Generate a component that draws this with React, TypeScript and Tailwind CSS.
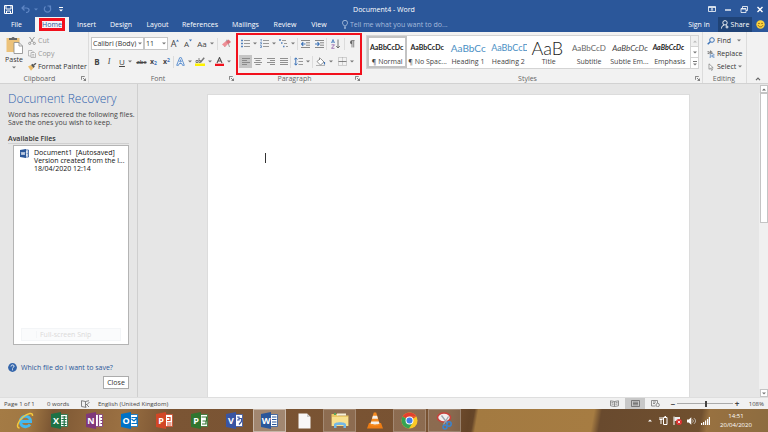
import type { ReactNode } from "react";

type Kids = { children?: ReactNode };

function Caret({ light = false }: { light?: boolean }) {
  return (
    <svg viewBox="0 0 4 3" className={`h-[3px] w-1 shrink-0 ${light ? "fill-white" : "fill-[#777]"}`} aria-hidden="true">
      <path d="M0 .5h4L2 2.5z" />
    </svg>
  );
}

function Tool({ label, width, active = false, children }: Kids & { label: string; width: string; active?: boolean }) {
  return (
    <button
      type="button"
      aria-label={label}
      title={label}
      className={`flex h-[13px] shrink-0 items-center justify-center gap-[3px] whitespace-nowrap leading-none ${width} ${active ? "bg-[#c5c5c5]" : ""}`}
    >
      {children}
    </button>
  );
}

function Divider() {
  return <span className="h-3 w-px shrink-0 bg-[#dcdcdc]" />;
}

function Launcher() {
  return (
    <button type="button" aria-label="More options" className="flex h-2 w-2 items-center justify-center">
      <svg viewBox="0 0 6 6" className="h-[5px] w-[5px]" fill="none" stroke="#666" strokeWidth="1">
        <path d="M.5 4.5v-4h4M2.5 2.5l3 3M5.5 3v2.5H3" />
      </svg>
    </button>
  );
}

function Group({ name, className, launcher = true, children }: Kids & { name: string; className: string; launcher?: boolean }) {
  return (
    <section aria-label={name} className={`flex flex-col ${className}`}>
      <div className="flex h-[42px]">{children}</div>
      <div className="flex h-[9px] items-center pr-px">
        <span className="flex-1 text-center text-[7px] leading-none text-[#666]">{name}</span>
        {launcher && <Launcher />}
      </div>
    </section>
  );
}

/* ---------- ribbon drawings ---------- */

function PasteIcon() {
  return (
    <svg viewBox="0 0 17 18" className="h-[18px] w-[17px]">
      <rect x="0.5" y="2" width="13" height="14" fill="#ecc27a" />
      <path d="M3 4V2h2.500a1.800 1.800 0 0 1 3.200 0H11v2z" fill="#666" />
      <path d="M8 6.500h5l3.500 3.500v7.500H8z" fill="#fff" stroke="#888" strokeWidth=".8" />
      <path d="M13 6.500V10h3.500" fill="none" stroke="#888" strokeWidth=".8" />
    </svg>
  );
}

function CutIcon() {
  return (
    <svg viewBox="0 0 8 8" className="h-2 w-2" fill="none" stroke="#999">
      <path d="M1.500 0l4 5.500M6.500 0l-4 5.500" />
      <circle cx="1.700" cy="6.400" r="1.100" />
      <circle cx="6.300" cy="6.400" r="1.100" />
    </svg>
  );
}

function CopyIcon() {
  return (
    <svg viewBox="0 0 8 8" className="h-2 w-2" fill="#f4f4f4" stroke="#aaa" strokeWidth=".8">
      <path d="M.5.5h3.500l1 1v4.500H.5z" />
      <path d="M3 2.500h3.500l1 1v4H3zM4.200 4.500h2M4.200 6h2" />
    </svg>
  );
}

function BrushIcon() {
  return (
    <svg viewBox="0 0 9 8" className="h-2 w-[9px]">
      <path d="M0 3.500l3-1.500 2.500 3L3 7.800z" fill="#ecbc68" />
      <path d="M3 2l1.500-1.200L6.800 3.500 5.500 5z" fill="#555" />
      <path d="M5.500 2.200L8 .3" stroke="#555" strokeWidth="1.400" />
    </svg>
  );
}

function ListIcon({ kind }: { kind: "bullet" | "number" | "level" }) {
  return (
    <svg viewBox="0 0 9 9" className="h-[9px] w-[9px]" fill="none">
      {kind === "bullet" && <path d="M0 1.500h2M0 4.500h2M0 7.500h2" stroke="#5482bd" strokeWidth="1.600" />}
      {kind === "number" && <path d="M.5 0h.7v2.500M0 3.700h1.500v1.300H.2M0 6.700h1.500v1.700H0" stroke="#5482bd" strokeWidth=".8" />}
      {kind === "level" && <path d="M0 1h2M2 4h1.500M4 7.500h1.500" stroke="#5482bd" strokeWidth="1.500" />}
      {kind === "level" ? (
        <path d="M3 1.500h4M5 4.500h3M7 7.500h2" stroke="#999" />
      ) : (
        <path d="M3 1.500h6M3 4.500h6M3 7.500h6" stroke="#999" />
      )}
    </svg>
  );
}

function IndentIcon({ right = false }: { right?: boolean }) {
  return (
    <svg viewBox="0 0 9 8" className="h-2 w-[9px]" fill="none">
      <path d="M0 .5h9M5 2.800h4M5 5.200h4M0 7.500h9" stroke="#888" />
      <path d={right ? "M0 4h4M2.500 2.200L4.200 4 2.500 5.800" : "M4.500 4H.5M2.200 2.200L.5 4l1.700 1.800"} stroke="#3c73b8" strokeWidth="1.100" />
    </svg>
  );
}

const alignLines = {
  left: "M0 .5h8M0 2.500h5M0 4.500h8M0 6.500h5",
  center: "M0 .5h8M1.500 2.500h5M0 4.500h8M1.500 6.500h5",
  right: "M0 .5h8M3 2.500h5M0 4.500h8M3 6.500h5",
  justify: "M0 .5h8M0 2.500h8M0 4.500h8M0 6.500h8",
};

function AlignIcon({ kind }: { kind: keyof typeof alignLines }) {
  return (
    <svg viewBox="0 0 8 7" className="h-[7px] w-2" fill="none" stroke="#858585" strokeWidth=".9">
      <path d={alignLines[kind]} />
    </svg>
  );
}

/* ---------- title bar and tabs ---------- */

function TitleBar() {
  return (
    <header className="grid h-[17px] grid-cols-[1fr_auto_1fr] items-center pt-px text-white">
      <div className="flex items-center pl-1">
        <button type="button" aria-label="Save" className="w-[17px]">
          <svg viewBox="0 0 9 9" className="h-[9px] w-[9px]" fill="none" stroke="#fff">
            <path d="M.5.5h8v8h-8zM2 .5v3.500h5V.5M2.500 8.500V6h4v2.500" />
          </svg>
        </button>
        <button type="button" aria-label="Undo" className="flex w-[22px] items-center gap-1">
          <svg viewBox="0 0 9 8" className="h-2 w-[9px]" fill="none" stroke="#5f86c4" strokeWidth="1.200">
            <path d="M3.500.5L1 3l2.500 2.500M1 3h4.500C9 3 9 7.500 5 7.500" />
          </svg>
          <svg viewBox="0 0 4 3" className="h-[3px] w-1" fill="#5f86c4"><path d="M0 .5h4L2 2.500z" /></svg>
        </button>
        <button type="button" aria-label="Redo" className="w-[14px]">
          <svg viewBox="0 0 9 8" className="h-2 w-[9px]" fill="none" stroke="#5f86c4" strokeWidth="1.200">
            <path d="M6.500 1.500a3.200 3.200 0 1 1-4 0M4.500 1h3v3" />
          </svg>
        </button>
        <button type="button" aria-label="Customise toolbar" className="flex w-2 flex-col items-center gap-px">
          <span className="h-px w-1 bg-white" />
          <Caret light />
        </button>
      </div>
      <h1 className="text-[7px] leading-none">Document4 - Word</h1>
      <div className="flex items-center justify-end gap-2 pr-1">
        <button type="button" aria-label="Ribbon options">
          <svg viewBox="0 0 8 6" className="h-[6px] w-2" fill="none" stroke="#fff" strokeWidth=".8">
            <path d="M.5.5h7v5h-7zM.5 1.500h7M4 5V2.500M2.800 3.600L4 2.500l1.200 1.100" />
          </svg>
        </button>
        <button type="button" aria-label="Minimise">
          <svg viewBox="0 0 8 6" className="h-[6px] w-2" stroke="#fff"><path d="M1 4h6" strokeWidth="1.300" /></svg>
        </button>
        <button type="button" aria-label="Restore">
          <svg viewBox="0 0 8 7" className="h-[7px] w-2" fill="none" stroke="#fff" strokeWidth=".8">
            <path d="M1 2.500h5v4H1zM2.500 2.500v-2h5v4H6M1 3h5" />
          </svg>
        </button>
        <button type="button" aria-label="Close window">
          <svg viewBox="0 0 8 7" className="h-[7px] w-2" stroke="#fff" strokeWidth="1.400"><path d="M1.500 1l5 5M6.500 1l-5 5" /></svg>
        </button>
      </div>
    </header>
  );
}

const tabs = [
  { name: "Insert", width: "w-[35px]" },
  { name: "Design", width: "w-[34px]" },
  { name: "Layout", width: "w-[39px]" },
  { name: "References", width: "w-[46px]" },
  { name: "Mailings", width: "w-[45px]" },
  { name: "Review", width: "w-[34px]" },
  { name: "View", width: "w-[34px]" },
];

function TabBar() {
  return (
    <nav aria-label="Ribbon tabs" className="flex h-[15px] items-stretch text-[7px] leading-none text-white">
      <button type="button" className="w-[33px]">File</button>
      <button type="button" className="ml-0.5 flex w-[34px] items-center justify-center bg-[#f4f4f4] text-[#2b579a]">
        <span className="flex h-[13px] w-[26px] items-center justify-center border-[3px] border-[#f2101c]">Home</span>
      </button>
      {tabs.map((t) => (
        <button key={t.name} type="button" className={t.width}>{t.name}</button>
      ))}
      <label className="flex min-w-0 flex-1 items-center gap-0.5 pl-1.5">
        <svg viewBox="0 0 6 9" className="h-[9px] w-[6px]" fill="none" stroke="#b9cbe6" strokeWidth=".8">
          <path d="M2 6C2 4.800.5 4.500.5 2.800a2.500 2.500 0 0 1 5 0C5.500 4.500 4 4.800 4 6zM2 7.300h2M2.300 8.500h1.400" />
        </svg>
        <input aria-label="Tell me" placeholder="Tell me what you want to do..." className="min-w-0 flex-1 text-[7px] leading-none text-white outline-none placeholder:text-[#a5bbdd]" />
      </label>
      <button type="button" className="w-[30px]">Sign in</button>
      <button type="button" className="ml-1 flex w-[34px] items-center justify-center gap-0.5 bg-[#1f4377]">
        <svg viewBox="0 0 8 9" className="h-[9px] w-2" fill="none" stroke="#fff" strokeWidth=".9">
          <circle cx="4" cy="2.800" r="2.200" />
          <path d="M.5 8.500c0-2 1-3 2.500-3.300M5 5.200l1 1M6 5.500v3M4.500 7h3" />
        </svg>
        Share
      </button>
      <button type="button" aria-label="Feedback" className="flex w-4 items-center justify-center">
        <svg viewBox="0 0 10 10" className="h-[9px] w-[9px]">
          <circle cx="5" cy="5" r="4.700" fill="#fbd13b" />
          <circle cx="3.300" cy="3.800" r=".7" fill="#6b4a12" />
          <circle cx="6.700" cy="3.800" r=".7" fill="#6b4a12" />
          <path d="M2.300 5.800c1 2.400 4.400 2.400 5.400 0" fill="none" stroke="#6b4a12" strokeWidth=".8" />
        </svg>
      </button>
    </nav>
  );
}

/* ---------- ribbon groups ---------- */

function ClipboardGroup() {
  return (
    <Group name="Clipboard" className="w-[89px] border-r border-[#dcdcdc]">
      <button type="button" className="flex w-7 flex-col items-center pt-1 text-[7px] leading-none text-[#333]">
        <PasteIcon />
        <span className="mt-0.5 mb-[3px]">Paste</span>
        <Caret />
      </button>
      <div className="flex flex-col pt-0.5 text-[7px] leading-none">
        <button type="button" className="flex h-[13px] items-center gap-0.5 text-[#999]"><CutIcon />Cut</button>
        <button type="button" className="flex h-[13px] items-center gap-0.5 text-[#999]"><CopyIcon />Copy</button>
        <button type="button" className="flex h-[13px] items-center gap-px whitespace-nowrap text-[#333]"><BrushIcon />Format Painter</button>
      </div>
    </Group>
  );
}

function Combo({ label, value, width }: { label: string; value: string; width: string }) {
  return (
    <label className={`flex h-[13px] items-center border border-[#c6c6c6] bg-white pr-px ${width}`}>
      <select aria-label={label} defaultValue={value} className="min-w-0 flex-1 appearance-none pl-px text-[7px] leading-none text-[#333] outline-none">
        <option>{value}</option>
      </select>
      <Caret />
    </label>
  );
}

function FontGroup() {
  return (
    <Group name="Font" className="w-[147px]">
      <div className="flex flex-col gap-[5px] pt-[5px] pl-0.5 text-[#444]">
        <div className="flex items-center">
          <Combo label="Font" value="Calibri (Body)" width="w-[53px]" />
          <Combo label="Font size" value="11" width="w-[24px]" />
          <Tool label="Grow font" width="w-[14px]">
            <span className="text-[9px]">A</span>
            <svg viewBox="0 0 3 3" className="-ml-[3px] mb-1.5 h-[3px] w-[3px] fill-[#3c73b8]"><path d="M0 2.500h3L1.500.5z" /></svg>
          </Tool>
          <Tool label="Shrink font" width="w-3">
            <span className="text-[8px]">A</span>
            <svg viewBox="0 0 3 3" className="-ml-[3px] mb-1.5 h-[3px] w-[3px] fill-[#3c73b8]"><path d="M0 .5h3L1.500 2.500z" /></svg>
          </Tool>
          <Tool label="Change case" width="w-[23px]"><span className="text-[8px]">Aa</span><Caret /></Tool>
          <Divider />
          <Tool label="Clear formatting" width="w-[17px]">
            <svg viewBox="0 0 9 9" className="h-[9px] w-[9px]">
              <path d="M2.500 8L5 .8 7.500 8" fill="none" stroke="#999" strokeWidth=".9" />
              <path d="M0 5.500l4-3.500 2.500 2.500L3 8z" fill="#ee8f96" />
              <path d="M4 3l2.500-2.500L9 3 6.500 5z" fill="#d9727b" />
            </svg>
          </Tool>
        </div>
        <div className="flex items-center text-[8px]">
          <Tool label="Bold" width="w-3"><b>B</b></Tool>
          <Tool label="Italic" width="w-3"><i className="font-['Liberation_Serif',serif]">I</i></Tool>
          <Tool label="Underline" width="w-[21px]"><u>U</u><Caret /></Tool>
          <Tool label="Strikethrough" width="w-[11px]"><s className="text-[6px] font-semibold">abc</s></Tool>
          <Tool label="Subscript" width="w-[13px]"><span className="text-[7px] font-bold">x<sub className="text-[5px] text-[#3c73b8]">2</sub></span></Tool>
          <Tool label="Superscript" width="w-[13px]"><span className="text-[7px] font-bold">x<sup className="text-[5px] text-[#3c73b8]">2</sup></span></Tool>
          <Divider />
          <Tool label="Text effects" width="w-[20px]">
            <svg viewBox="0 0 9 9" className="h-[9px] w-[9px]" fill="#fff" stroke="#4f86c9" strokeWidth=".9">
              <path d="M.7 8.300L3.700.7h1.600l3 7.600H6.500L5.800 6.500H3.200l-.7 1.800zM3.700 5L4.500 2.700 5.300 5z" />
            </svg>
            <Caret />
          </Tool>
          <Tool label="Highlight colour" width="w-[19px]">
            <svg viewBox="0 0 10 9" className="h-[9px] w-[10px]">
              <path d="M0 6.500h10V9H0z" fill="#fff200" />
              <path d="M1 3.500h2V5.500H1zM4 1v4.500h1.500v-2H4" fill="none" stroke="#666" strokeWidth=".8" />
              <path d="M5.500 5.200L9.200.8" stroke="#777" strokeWidth="1.500" />
            </svg>
            <Caret />
          </Tool>
          <Tool label="Font colour" width="w-[20px]">
            <svg viewBox="0 0 9 9" className="h-[9px] w-[9px]">
              <path d="M0 6.700h9V9H0z" fill="#f2101c" />
              <path d="M2 6L4.500.5 7 6M3 4h3" fill="none" stroke="#555" strokeWidth="1.100" />
            </svg>
            <Caret />
          </Tool>
        </div>
      </div>
    </Group>
  );
}

function ParagraphGroup() {
  return (
    <Group name="Paragraph" className="w-[126px]">
      <div className="mt-px flex w-full flex-col gap-[5px] self-start border-2 border-[#f2101c] px-px pt-0.5 pb-[5px]">
        <div className="flex items-center">
          <Tool label="Bullets" width="w-[19px]"><ListIcon kind="bullet" /><Caret /></Tool>
          <Tool label="Numbering" width="w-[19px]"><ListIcon kind="number" /><Caret /></Tool>
          <Tool label="Multilevel list" width="w-[20px]"><ListIcon kind="level" /><Caret /></Tool>
          <Divider />
          <Tool label="Decrease indent" width="w-[15px]"><IndentIcon /></Tool>
          <Tool label="Increase indent" width="w-[13px]"><IndentIcon right /></Tool>
          <Divider />
          <Tool label="Sort" width="w-[17px]">
            <svg viewBox="0 0 9 10" className="h-[10px] w-[9px]" fill="none">
              <path d="M.5 4L2 .5 3.500 4M1 3h2" stroke="#3c73b8" strokeWidth=".8" />
              <path d="M.5 5.800h3l-3 3.500h3" stroke="#8e5aa5" strokeWidth=".8" />
              <path d="M7 .5v8.500M5.200 7L7 9l1.800-2" stroke="#666" strokeWidth=".9" />
            </svg>
          </Tool>
          <Divider />
          <Tool label="Show marks" width="w-[14px]">
            <svg viewBox="0 0 7 9" className="h-2 w-[6px]">
              <path d="M3.500.5h3M3.500.5v8M5.500.5v8" stroke="#666" strokeWidth=".9" />
              <path d="M3.500.2a2.300 2.300 0 0 0 0 4.600z" fill="#666" />
            </svg>
          </Tool>
        </div>
        <div className="flex items-center">
          <Tool label="Align left" width="w-[13px]" active><AlignIcon kind="left" /></Tool>
          <Tool label="Centre" width="w-[12px]"><AlignIcon kind="center" /></Tool>
          <Tool label="Align right" width="w-[13px]"><AlignIcon kind="right" /></Tool>
          <Tool label="Justify" width="w-[13px]"><AlignIcon kind="justify" /></Tool>
          <Divider />
          <Tool label="Line spacing" width="w-[21px]">
            <svg viewBox="0 0 9 9" className="h-[9px] w-[9px]" fill="none">
              <path d="M1.800 1v7M.3 2.500L1.800.8l1.500 1.700M.3 6.500l1.500 1.700 1.500-1.700" stroke="#3c73b8" />
              <path d="M4.500 1.500H9M4.500 4.500H9M4.500 7.500H9" stroke="#999" />
            </svg>
            <Caret />
          </Tool>
          <Divider />
          <Tool label="Shading" width="w-[23px]">
            <svg viewBox="0 0 10 9" className="h-[9px] w-[10px]" fill="#fff" stroke="#777" strokeWidth=".8">
              <path d="M1 4.500L4.500 1.500 8 5 4.500 8zM3.500 3V.5" />
              <path d="M8.500 5v2.500" stroke="#3c73b8" strokeWidth="1.200" />
              <path d="M0 8.600h9" stroke="#999" />
            </svg>
            <Caret />
          </Tool>
          <Tool label="Borders" width="w-[19px]">
            <svg viewBox="0 0 9 9" className="h-[9px] w-[9px]" fill="none" stroke="#999" strokeWidth=".8">
              <path d="M.5.5h8v8h-8zM4.500.5v8" strokeDasharray="1 1" />
              <path d="M.5 4.500h8" stroke="#666" />
            </svg>
            <Caret />
          </Tool>
        </div>
      </div>
    </Group>
  );
}

const styles = [
  { name: "¶ Normal", sample: "AaBbCcDc", look: "text-[7px] font-bold text-[#222]" },
  { name: "¶ No Spac...", sample: "AaBbCcDc", look: "text-[7px] font-bold text-[#222]" },
  { name: "Heading 1", sample: "AaBbCc", look: "text-[10px] text-[#4a8fc4]" },
  { name: "Heading 2", sample: "AaBbCcD", look: "text-[9px] text-[#4a8fc4]" },
  { name: "Title", sample: "AaB", look: "text-[18px] font-light text-[#222]" },
  { name: "Subtitle", sample: "AaBbCcD", look: "text-[8px] text-[#666]" },
  { name: "Subtle Em...", sample: "AaBbCcDc", look: "text-[8px] italic text-[#444]" },
  { name: "Emphasis", sample: "AaBbCcDc", look: "text-[7px] font-bold italic text-[#222]" },
];

function StylesGroup() {
  return (
    <Group name="Styles" className="min-w-0 flex-1">
      <div className="ml-1 mr-[3px] mt-[3px] flex h-[34px] min-w-0 flex-1 border border-[#d4d4d4] bg-white">
        <div className="grid min-w-0 flex-1 grid-cols-8">
          {styles.map((s, i) => (
            <button
              key={s.name}
              type="button"
              className={`flex min-w-0 flex-col items-center border-2 ${i === 0 ? "border-[#c3c3c3]" : "border-transparent"}`}
            >
              <span className={`flex h-[19px] w-full items-center overflow-hidden whitespace-nowrap pl-px font-[Lato,sans-serif] leading-none ${s.look}`}>
                {s.sample}
              </span>
              <span className="whitespace-nowrap text-[7px] leading-[9px] text-[#444]">{s.name}</span>
            </button>
          ))}
        </div>
        <div className="flex w-2 flex-col divide-y divide-[#d4d4d4] border-l border-[#d4d4d4]">
          <button type="button" aria-label="Previous styles" className="flex flex-1 items-center justify-center bg-[#f0f0f0]">
            <svg viewBox="0 0 4 3" className="h-[3px] w-1 fill-[#bbb]"><path d="M0 2.500h4L2 .5z" /></svg>
          </button>
          <button type="button" aria-label="Next styles" className="flex flex-1 items-center justify-center"><Caret /></button>
          <button type="button" aria-label="More styles" className="flex flex-1 flex-col items-center justify-center gap-px">
            <span className="h-px w-1 bg-[#777]" />
            <Caret />
          </button>
        </div>
      </div>
    </Group>
  );
}

function EditingGroup() {
  return (
    <Group name="Editing" className="w-[45px] border-x border-[#dcdcdc]" launcher={false}>
      <div className="flex flex-col pt-0.5 pl-1 text-[7px] leading-none text-[#333]">
        <button type="button" className="flex h-[13px] items-center gap-0.5">
          <svg viewBox="0 0 8 8" className="h-2 w-2" fill="none" stroke="#3c73b8">
            <circle cx="5" cy="3" r="2.300" />
            <path d="M3.300 4.700L.7 7.300" strokeWidth="1.500" />
          </svg>
          <span className="mr-1">Find</span>
          <Caret />
        </button>
        <button type="button" className="flex h-[13px] items-center gap-0.5">
          <svg viewBox="0 0 9 8" className="h-2 w-2" fill="none" strokeWidth=".9">
            <path d="M.5 1.500h2V3.500H.7M4 0v3.500h1.500v-2H4" stroke="#666" />
            <path d="M3 5h1.500v2.500H2.800M8.500 5H6.500v2.500h2M6 3l1 1" stroke="#3c73b8" />
          </svg>
          Replace
        </button>
        <button type="button" className="flex h-[13px] items-center gap-0.5">
          <svg viewBox="0 0 8 8" className="h-2 w-2" fill="#fff" stroke="#888" strokeWidth=".8">
            <path d="M2 .8v5.500l1.500-1.200 1 2.300 1-.5-1-2.100h1.700z" />
          </svg>
          Select
          <Caret />
        </button>
      </div>
    </Group>
  );
}

function Ribbon() {
  return (
    <div className="flex border-b border-[#d2d2d2] bg-[#f2f2f2]">
      <ClipboardGroup />
      <FontGroup />
      <ParagraphGroup />
      <StylesGroup />
      <EditingGroup />
      <div className="flex w-[21px] items-end justify-center pb-0.5">
        <button type="button" aria-label="Collapse ribbon">
          <svg viewBox="0 0 6 4" className="h-1 w-[6px]" fill="none" stroke="#666" strokeWidth="1.200"><path d="M1 3.200L3 1.200l2 2" /></svg>
        </button>
      </div>
    </div>
  );
}

/* ---------- workspace ---------- */

function RecoveryPane() {
  return (
    <aside aria-label="Document Recovery" className="flex w-[138px] shrink-0 flex-col border-r border-[#cfcfcf] pt-2 pr-2 pl-2 text-[#444]">
      <h2 className="whitespace-nowrap text-[12px] leading-[14px] font-light text-[#2f62ad]">Document Recovery</h2>
      <p className="mt-1 whitespace-nowrap pt-px text-[7px] leading-[8px]">
        Word has recovered the following files.<br />Save the ones you wish to keep.
      </p>
      <h3 className="mt-[7px] border-b border-[#d0d0d0] text-[7px] leading-[9px] font-semibold text-[#333]">Available Files</h3>
      <div className="mt-px ml-[5px] flex flex-1 flex-col border border-[#b4b4b4] bg-white">
        <button type="button" className="flex items-start gap-[5px] pt-[3px] pl-1.5 text-left text-[7px] leading-[8px] text-[#111]">
          <svg viewBox="0 0 9 9" className="h-[9px] w-[9px]">
            <path d="M4.500 1h4v7h-4z" fill="#fff" stroke="#2b579a" strokeWidth=".8" />
            <path d="M0 1l6-1v9L0 8z" fill="#2b579a" />
            <path d="M1.200 3l.8 3 1-3 1 3 .8-3" fill="none" stroke="#fff" strokeWidth=".7" />
            <path d="M6.500 3h1.500M6.500 4.500h1.500M6.500 6h1.500" stroke="#2b579a" strokeWidth=".6" />
          </svg>
          <span className="whitespace-nowrap">
            Document1&nbsp; [Autosaved]<br />Version created from the l...<br />18/04/2020 12:14
          </span>
        </button>
        <div className="mx-[7px] mt-auto mb-[3px] flex h-[13px] items-center border border-[#f3f5f7] bg-[#fafbfc] text-[7px] leading-none text-[#dadada]">
          <span className="ml-[14px] border-l border-[#f3f5f7] pl-[3px]">Full-screen Snip</span>
        </div>
      </div>
      <a href="#help" className="mt-[18px] flex items-center gap-1 text-[7px] leading-[9px] text-[#2b579a]">
        <svg viewBox="0 0 9 9" className="h-[9px] w-[9px]">
          <circle cx="4.500" cy="4.500" r="4.400" fill="#3566ab" />
          <path d="M3 3.500c0-2 3-2 3-.2 0 1.200-1.500 1-1.500 2.200M4.500 6.300v1" fill="none" stroke="#fff" strokeWidth=".9" />
        </svg>
        Which file do I want to save?
      </a>
      <button type="button" className="mt-1 mb-2 h-[13px] w-[26px] self-end border border-[#ababab] bg-white text-[7px] leading-none text-[#333]">Close</button>
    </aside>
  );
}

function ScrollBar() {
  return (
    <div className="flex w-[9px] flex-col items-center pt-px">
      <button type="button" aria-label="Scroll up" className="flex h-2 w-2 items-center justify-center border border-[#c4c4c4] bg-white">
        <svg viewBox="0 0 4 3" className="h-[3px] w-1 fill-[#666]"><path d="M0 2.500h4L2 .5z" /></svg>
      </button>
      <div className="w-full flex-1 bg-[#f0f0f0]">
        <div className="mx-auto h-[44%] w-2 border border-[#c4c4c4] bg-white" />
      </div>
      <button type="button" aria-label="Scroll down" className="flex h-2 w-2 items-center justify-center border border-[#c4c4c4] bg-white"><Caret /></button>
    </div>
  );
}

function Workspace() {
  return (
    <main className="flex min-h-0 flex-1 bg-[#e6e6e6]">
      <RecoveryPane />
      <div className="flex min-w-0 flex-1 px-[69px] pt-2.5">
        <article aria-label="Page" className="flex-1 border-x border-t border-[#dcdcdc] bg-white pt-[58px] pl-[57px]">
          <div className="h-[10px] w-px bg-[#333]" />
        </article>
      </div>
      <ScrollBar />
    </main>
  );
}

function StatusBar() {
  return (
    <footer className="flex h-3 shrink-0 items-center border-t border-[#dedede] bg-[#f1f1f1] pr-1 pl-1 text-[6px] leading-none text-[#444]">
      <span className="w-[43px] whitespace-nowrap">Page 1 of 1</span>
      <span className="w-[34px] whitespace-nowrap">0 words</span>
      <button type="button" aria-label="Proofing" className="w-[17px]">
        <svg viewBox="0 0 9 8" className="h-2 w-[9px]" fill="none" stroke="#666" strokeWidth=".8">
          <path d="M4.500 1.500L.5.700v5.800l4 .8 1-.3M4.500 1.500v5.800M4.500 1.500L8 .7M5.500 5L8.500 2M5 4l3 3" />
        </svg>
      </button>
      <span className="flex-1">English (United Kingdom)</span>
      <button type="button" aria-label="Read mode" className="flex h-full w-4 items-center justify-center">
        <svg viewBox="0 0 9 7" className="h-[7px] w-[9px]" fill="none" stroke="#777" strokeWidth=".8">
          <path d="M.5.8l4 .7 4-.7v5l-4 .7-4-.7zM4.500 1.500v5M1.500 2.500l2 .3M1.500 4l2 .3M5.500 2.800l2-.3M5.500 4.300l2-.3" />
        </svg>
      </button>
      <button type="button" aria-label="Print layout" className="ml-[3px] flex h-full w-5 items-center justify-center bg-[#c8c8c8]">
        <svg viewBox="0 0 9 7" className="h-[7px] w-[9px]" fill="none" stroke="#666" strokeWidth=".8">
          <path d="M.5.5h8v6h-8zM2 2.200h5M2 3.500h5M2 4.800h5" />
        </svg>
      </button>
      <button type="button" aria-label="Web layout" className="flex h-full w-[21px] items-center justify-center">
        <svg viewBox="0 0 9 7" className="h-[7px] w-[9px]" fill="none" stroke="#777" strokeWidth=".8">
          <path d="M4.500 6H.5V.5h6v2.500M2 2h3M2 3.500h2" />
          <circle cx="6.700" cy="5" r="1.700" />
        </svg>
      </button>
      <button type="button" aria-label="Zoom out" className="ml-[3px] w-2 text-[8px] font-bold">−</button>
      <input
        type="range"
        aria-label="Zoom"
        min={0}
        max={100}
        defaultValue={52}
        className="h-2 w-[56px] appearance-none bg-[linear-gradient(#aaa,#aaa)] bg-[length:100%_1px] bg-center bg-no-repeat [&::-webkit-slider-thumb]:h-[6px] [&::-webkit-slider-thumb]:w-0.5 [&::-webkit-slider-thumb]:appearance-none [&::-webkit-slider-thumb]:bg-[#444]"
      />
      <button type="button" aria-label="Zoom in" className="w-2 text-[8px] font-bold">+</button>
      <span className="w-[23px] text-right">108%</span>
    </footer>
  );
}

/* ---------- taskbar ---------- */

function OfficeIcon({ letter, color, page }: { letter: string; color: string; page: string }) {
  return (
    <svg viewBox="0 0 17 17" className="h-[17px] w-[17px]">
      <path d="M8 2.500h8.500v12H8z" fill="#fff" stroke={color} strokeWidth=".8" />
      <path d={page} fill="none" stroke={color} strokeWidth="1.200" />
      <path d="M0 2l10-2v17L0 15z" fill={color} />
      <text x="5" y="12" fill="#fff" fontSize="9" fontWeight="700" textAnchor="middle">{letter}</text>
    </svg>
  );
}

const apps: { name: string; tile?: string; icon: ReactNode }[] = [
  {
    name: "Internet Explorer",
    icon: (
      <svg viewBox="0 0 18 18" className="h-[18px] w-[18px]" fill="none">
        <path d="M4.500 9.500h10C14.500 2.500 4.500 2.500 4.500 9.500c0 6 7 6.500 9.500 3" stroke="#45b8ee" strokeWidth="3" />
        <path d="M3.500 16C-.5 16 2 9 7 5s10-5 9.500-1" stroke="#f5c93a" strokeWidth="1.500" />
      </svg>
    ),
  },
  { name: "Excel", icon: <OfficeIcon letter="X" color="#1e7145" page="M10.500 5h5M10.500 7.500h5M10.500 10h5M10.500 12.500h5M13.200 4v10" /> },
  { name: "OneNote", icon: <OfficeIcon letter="N" color="#80397b" page="M12.500 3v11M14.500 5.500h2M14.500 8.500h2M14.500 11.500h2" /> },
  { name: "Outlook", icon: <OfficeIcon letter="O" color="#0072c6" page="M10.500 5.500h5.500v6h-5.500M10.500 7l2.500 2 3-3" /> },
  { name: "PowerPoint", icon: <OfficeIcon letter="P" color="#d24726" page="M11 5.500h3v3h-3M11 11h4.500M11 13h4.500" /> },
  { name: "Project", icon: <OfficeIcon letter="P" color="#31752f" page="M10.500 5h5v4h-4M15 9v3h-4" /> },
  { name: "Visio", icon: <OfficeIcon letter="V" color="#3955a3" page="M11 5h2v3h-2M13 6.500h2.500v3L13 12.500" /> },
  { name: "Word", tile: "bg-white/30 border-white/40", icon: <OfficeIcon letter="W" color="#2b579a" page="M11 5h4.500M11 7.500h4.500M11 10h4.500M11 12.500h4.500" /> },
  {
    name: "Blank document",
    icon: <svg viewBox="0 0 13 16" className="h-4 w-[13px]"><path d="M.5.5h8.500L12.500 4v11.500H.5z" fill="#f8f8f8" /><path d="M9 .5V4h3.500" fill="#ccc" /></svg>,
  },
  {
    name: "File Explorer",
    tile: "bg-white/15 border-white/20",
    icon: (
      <svg viewBox="0 0 18 17" className="h-[17px] w-[18px]">
        <path d="M.5 2h6l1 1.500h10V14H.5z" fill="#e9c766" />
        <path d="M3 1h2v2H3z" fill="#58a55c" /><path d="M6 1.500h9v2H6z" fill="#f6f0d8" />
        <path d="M1 5h16v9H1z" fill="#f8e08e" />
        <path d="M3 16v-3.500c0-3 12-3 12 0V16h-2.500v-3h-7v3z" fill="#72b7e6" />
      </svg>
    ),
  },
  {
    name: "VLC",
    icon: (
      <svg viewBox="0 0 16 17" className="h-[17px] w-4">
        <path d="M2 11h12l2 5.500H0z" fill="#ee7d14" />
        <path d="M6.800.5h2.400L13 13c-2 1.500-8 1.500-10 0z" fill="#f58a1f" />
        <path d="M5.900 3.700h4.200l.9 3H5zM4.200 9.500h7.600l.7 2c-2 1.200-7 1.200-9 0z" fill="#f4f0ea" />
      </svg>
    ),
  },
  {
    name: "Chrome",
    tile: "bg-white/15 border-white/20",
    icon: (
      <svg viewBox="0 0 18 18" className="h-[17px] w-[17px]">
        <circle cx="9" cy="9" r="8.500" fill="#fbc926" />
        <path d="M9 9L1.640 4.750A8.500 8.500 0 0 1 16.360 4.750H9z" fill="#e2402f" />
        <path d="M9 9L1.640 4.750A8.500 8.500 0 0 0 8.500 17.500L12.500 11z" fill="#36a352" />
        <path d="M9 4.750h7.360L9 9z" fill="#e2402f" />
        <circle cx="9" cy="9" r="4.200" fill="#fff" /><circle cx="9" cy="9" r="3.200" fill="#3f7de8" />
      </svg>
    ),
  },
  {
    name: "Snipping Tool",
    tile: "bg-white/15 border-white/20",
    icon: (
      <svg viewBox="0 0 18 18" className="h-[18px] w-[18px]" fill="none">
        <ellipse cx="8" cy="5.500" rx="6.500" ry="4.500" fill="#f3eeee" stroke="#c9413b" strokeWidth="1.600" />
        <path d="M5.500 3.500l6 8M12.500 4.500l-5 8" stroke="#9aa3ad" strokeWidth="1.300" />
        <circle cx="13" cy="12" r="2.200" stroke="#3a83cf" strokeWidth="1.500" />
        <circle cx="9" cy="15" r="2" stroke="#3a83cf" strokeWidth="1.500" />
      </svg>
    ),
  },
];

function TaskBar() {
  return (
    <nav
      aria-label="Taskbar"
      className="flex h-[23px] shrink-0 items-stretch bg-[linear-gradient(100deg,#a47b45_0%,#a17843_4%,#7c5734_7%,#93693e_13%,#9a7042_16%,#7b5534_22%,#785232_58%,#644427_61%,#664629_61.5%,#a37a41_62%,#a67c42_77%,#694a2e_78%,#70502f_91%,#987140_92%,#8d6c40_100%)] pr-2 pl-2 text-[7px] text-white"
    >
      {apps.map((a) => (
        <button
          key={a.name}
          type="button"
          aria-label={a.name}
          title={a.name}
          className={`mr-0.5 flex w-[33px] items-center justify-center border ${a.tile ?? "border-transparent"}`}
        >
          {a.icon}
        </button>
      ))}
      <div className="ml-auto flex items-center gap-[5px]">
        <svg viewBox="0 0 4 3" className="mr-0.5 h-[3px] w-1 fill-white"><path d="M0 2.500h4L2 .5z" /></svg>
        <svg viewBox="0 0 9 9" className="h-[9px] w-[9px]" fill="none" stroke="#fff">
          <path d="M4.500 1.500h3.500v7H4.500zM5.500.5h1.500M1 1v2.500M3 1v2.500M.5 3.500h3M2 4v4" />
        </svg>
        <svg viewBox="0 0 9 9" className="h-[9px] w-[9px]">
          <path d="M1 .5v8.500" stroke="#fff" /><path d="M1.500 1h5.500v4H1.500z" fill="#eee" />
          <circle cx="6" cy="6" r="3" fill="#dc2f2f" /><path d="M4.800 4.800l2.400 2.400M7.200 4.800L4.800 7.200" stroke="#fff" strokeWidth=".8" />
        </svg>
        <svg viewBox="0 0 9 8" className="h-2 w-[9px]">
          <path d="M0 2.500h1.800L4.300.3v7.400L1.800 5.500H0z" fill="#fff" />
          <path d="M5.500 2.500c1 1 1 2 0 3M7 1.200c2 2 2 3.600 0 5.600" fill="none" stroke="#ddd" strokeWidth=".8" />
        </svg>
        <svg viewBox="0 0 9 8" className="h-2 w-[9px] fill-white"><path d="M0 6h1.200v2H0zM2 5h1.200v3H2zM4 3.500h1.200V8H4zM6 2h1.200v6H6zM7.800 0H9v8H7.800z" /></svg>
      </div>
      <time dateTime="2020-04-20T14:51" className="mr-1.5 ml-2 flex w-[36px] flex-col items-center justify-center whitespace-nowrap text-[6px] leading-[9px]">
        <span>14:51</span>
        <span>20/04/2020</span>
      </time>
    </nav>
  );
}

export default function App() {
  return (
    <div className="flex min-h-screen flex-col bg-[#2b579a] font-['Open_Sans','Noto_Sans',sans-serif]">
      <TitleBar />
      <TabBar />
      <Ribbon />
      <Workspace />
      <StatusBar />
      <TaskBar />
    </div>
  );
}
